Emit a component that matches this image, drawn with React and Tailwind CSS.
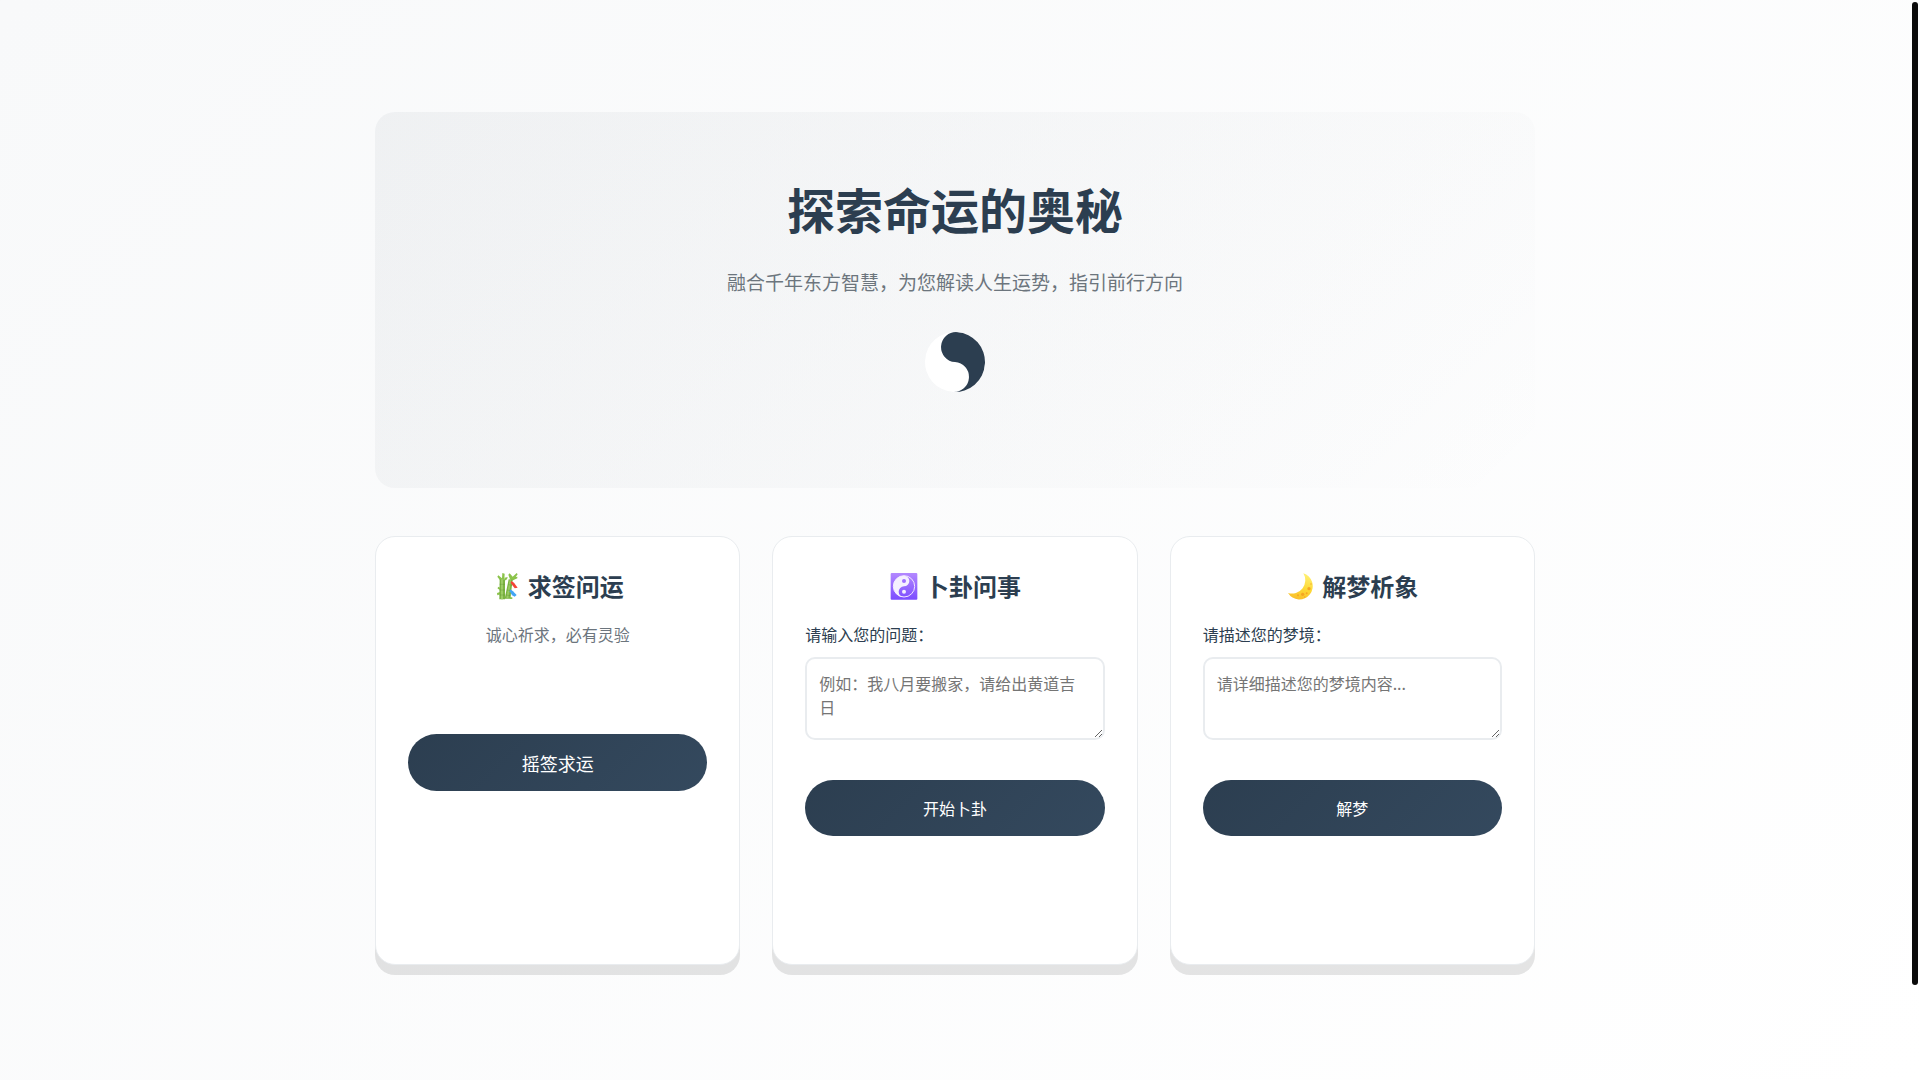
import React from "react";

function TaiChi() {
  return (
    <svg viewBox="0 0 60 60" className="h-[60px] w-[60px] rotate-4" aria-hidden="true">
      <circle cx="30" cy="30" r="30" fill="#ffffff" />
      <path
        d="M30 0a30 30 0 0 1 0 60a15 15 0 0 0 0-30a15 15 0 0 1 0-30z"
        fill="#2c3e50"
      />
    </svg>
  );
}

function BambooIcon() {
  return (
    <svg viewBox="0 0 90 84" className="h-7 w-[30px]" aria-hidden="true">
      {/* Leaves */}
      <path
        d="M24 25L16 14l3-4 11 9 1-16 7 2-1 17zM38 17l9-2-2 7-7 4zM54 22L49 8l4-4 9 10L74 3l3 4-6 8 5-1 0 5-16 7zM24 60l-9 3 1 7 9-3zM26 48l-8-4-1 6 8 4z"
        fill="#8bc34a"
      />
      {/* Stalks */}
      <path d="M38 80L50 22l12 1-6 50 1 7z" fill="#7cb342" />
      <path d="M43 79l10-55 4 1-8 54z" fill="#9ccc65" />
      <path d="M23 22h16v60H22z" fill="#7cb342" />
      <path d="M27 22h6v60h-6z" fill="#9ccc65" />
      <path
        d="M23 37h16M22 54h17M22 69h17M49 38l12 2M46 54l12 2M43 69l13 2"
        stroke="#558b2f"
        strokeWidth="1"
        fill="none"
      />
      {/* Paper strips */}
      <path d="M58 27l8 5 11 15-9 2-12-16z" fill="#f44336" />
      <path d="M55 52l8 6 11 11-6 5-8-4-7-12z" fill="#42a5f5" />
      <path d="M54 76h7v5h-8z" fill="#8bc34a" />
    </svg>
  );
}

function YinYangIcon() {
  return (
    <svg viewBox="0 0 90 84" className="h-7 w-[30px]" aria-hidden="true">
      <defs>
        <linearGradient id="yinyang-fill" x1="0" y1="0" x2="0" y2="1">
          <stop offset="0" stopColor="#b388ff" />
          <stop offset="1" stopColor="#7c4dff" />
        </linearGradient>
      </defs>
      <rect x="5" y="3" width="80" height="80" rx="3" fill="url(#yinyang-fill)" />
      <circle cx="45" cy="43" r="32" fill="none" stroke="#f3e5ff" strokeWidth="3" />
      <path
        d="M45 11a32 32 0 0 0 0 64a16 16 0 0 1 0-32a16 16 0 0 0 0-32z"
        fill="#f5f0ff"
      />
      <circle cx="45" cy="27" r="6" fill="#9e70ff" />
      <circle cx="45" cy="59" r="6" fill="#f5f0ff" />
    </svg>
  );
}

function MoonIcon() {
  return (
    <svg viewBox="0 0 90 84" className="h-7 w-[30px]" aria-hidden="true">
      <defs>
        <linearGradient id="moon-fill" x1="0.7" y1="0" x2="0.5" y2="1">
          <stop offset="0" stopColor="#fff176" />
          <stop offset="0.6" stopColor="#fdd835" />
          <stop offset="1" stopColor="#f9c02d" />
        </linearGradient>
      </defs>
      <path d="M52 4A40 40 0 1 1 6 63A40 40 0 0 0 52 4z" fill="url(#moon-fill)" />
      <circle cx="69" cy="50" r="5" fill="#f5a623" />
      <circle cx="50" cy="67" r="5" fill="#f5a623" />
      <circle cx="62" cy="64" r="3" fill="#f5a623" />
      <circle cx="36" cy="70" r="3" fill="#f5a623" />
      <circle cx="75" cy="36" r="2" fill="#f5a623" />
      <circle cx="56" cy="75" r="2" fill="#f5a623" />
    </svg>
  );
}

function Hero() {
  return (
    <section className="flex flex-col items-center rounded-[20px] bg-linear-135 from-[#2c3e50]/5 to-transparent px-8 pt-16 pb-24 text-center">
      <h1 className="mb-[22px] text-5xl leading-[64px] font-bold">探索命运的奥秘</h1>
      <p className="mb-[30px] text-[19px] leading-10 text-[#6c757d]">
        融合千年东方智慧，为您解读人生运势，指引前行方向
      </p>
      <TaiChi />
    </section>
  );
}

function Card({ icon, title, children }) {
  return (
    <section className="flex min-h-[429px] flex-col rounded-[20px] border border-[#e9ecef] bg-white p-8 shadow-[0_10px_0_rgba(0,0,0,0.1)]">
      <h2 className="mb-[18px] flex items-center justify-center gap-1.5 text-2xl leading-[34px] font-bold">
        {icon}
        {title}
      </h2>
      {children}
    </section>
  );
}

function ActionButton({ className, children }) {
  return (
    <button
      type="button"
      className={`w-full cursor-pointer rounded-full bg-linear-135 from-[#2c3e50] to-[#34495e] text-white ${className}`}
    >
      {children}
    </button>
  );
}

function Question({ id, label, placeholder, action }) {
  return (
    <form className="flex flex-col">
      <label htmlFor={id} className="mb-2.5 leading-[26px]">
        {label}
      </label>
      <textarea
        id={id}
        placeholder={placeholder}
        className="mb-10 block h-[83px] w-full resize-y rounded-[10px] border-2 border-[#e9ecef] bg-white p-3 text-base leading-6 placeholder:text-[#757575]"
      />
      <ActionButton className="h-14 text-base">{action}</ActionButton>
    </form>
  );
}

export default function App() {
  return (
    <div className="flex min-h-screen bg-linear-135 from-[#f8f9fa] to-white font-['Noto_Sans_CJK_SC',sans-serif] text-[#2c3e50]">
      <main className="mx-auto w-full max-w-[1200px] px-5 pt-28 pb-24">
        <Hero />
        <div className="mt-12 grid grid-cols-3 gap-8">
          <Card icon={<BambooIcon />} title="求签问运">
            <p className="mb-[87px] text-center leading-[26px] text-[#6c757d]">
              诚心祈求，必有灵验
            </p>
            <ActionButton className="h-[57px] text-lg">摇签求运</ActionButton>
          </Card>
          <Card icon={<YinYangIcon />} title="卜卦问事">
            <Question
              id="question"
              label="请输入您的问题："
              placeholder="例如：我八月要搬家，请给出黄道吉日"
              action="开始卜卦"
            />
          </Card>
          <Card icon={<MoonIcon />} title="解梦析象">
            <Question
              id="dream"
              label="请描述您的梦境："
              placeholder="请详细描述您的梦境内容..."
              action="解梦"
            />
          </Card>
        </div>
      </main>

      {/* Scroll track */}
      <div className="h-screen w-2.5 p-0.5" aria-hidden="true">
        <div className="h-[91.4%] rounded-full bg-[#0a0a0a]" />
      </div>
    </div>
  );
}
